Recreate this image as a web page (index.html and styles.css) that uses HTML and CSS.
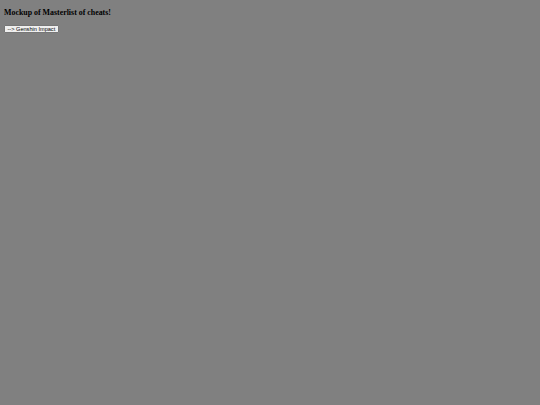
FILE: index.html
```html
<!DOCTYPE html>
<html>
<head>
<meta charset="utf-8">
<title>Mockup</title>
<link rel="stylesheet" href="styles.css">
</head>
<body class="page">
<h3 class="title">Mockup of Masterlist of cheats!</h3>
<button class="link-btn">--&gt; Genshin Impact</button>
</body>
</html>
```
FILE: styles.css
```css
html, body {
  background: #808080;
}
.page {
  margin: 4px;
  font-family: "Liberation Serif", serif;
}
.title {
  font-family: "Liberation Serif", serif;
  font-weight: bold;
  font-size: 7.9px;
  line-height: 9px;
  margin: 4px 0 8px 0;
  color: #000;
}
.link-btn {
  font-family: "Liberation Sans", Arial, sans-serif;
  font-size: 5.6px;
  line-height: 7px;
  padding: 0 2.5px;
  height: 8.5px;
  margin: -0.5px 0 0 0;
  border: 0.5px solid #767676;
  border-radius: 1px;
  background: #efefef;
  color: #000;
  display: block;
}
```
